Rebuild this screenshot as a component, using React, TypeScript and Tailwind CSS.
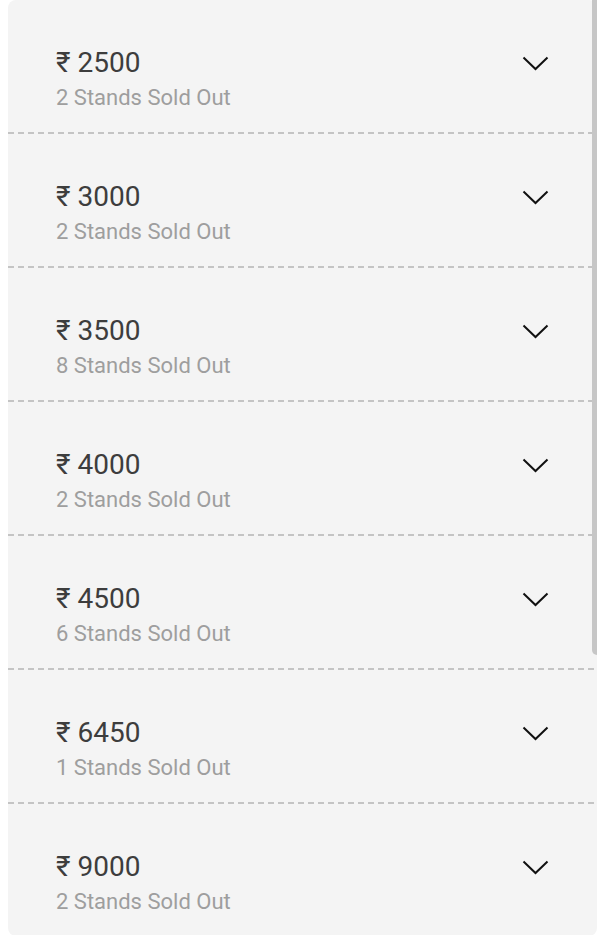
const tiers = [
  { price: 2500, sold: 2 },
  { price: 3000, sold: 2 },
  { price: 3500, sold: 8 },
  { price: 4000, sold: 2 },
  { price: 4500, sold: 6 },
  { price: 6450, sold: 1 },
  { price: 9000, sold: 2 },
];

function Chevron() {
  return (
    <svg width="27" height="15" viewBox="0 0 27 15" fill="none" className="shrink-0">
      <path d="M1.5 1.5 L13.5 13 L25.5 1.5" stroke="#111" strokeWidth="2" />
    </svg>
  );
}

export default function App() {
  return (
    <div className="relative min-h-[935px] bg-white pl-2 font-['Roboto',sans-serif]">
      <div className="rounded-lg bg-[#f4f4f4]">
        {tiers.map((t, i) => (
          <div key={t.price}>
            <div className="flex items-start pl-12 pr-[48px] pt-[45px] pb-[19px]">
              <div className="flex-1">
                <p className="text-[28px] leading-[36px] text-[#3d3d3d]">₹ {t.price}</p>
                <p className="mt-[2px] text-[22px] leading-[30px] text-[#9e9e9e]">
                  {t.sold} Stands Sold Out
                </p>
              </div>
              <div className="flex h-[36px] items-center pt-[1px]">
                <Chevron />
              </div>
            </div>
            {i < tiers.length - 1 && (
              <div className="h-[2px] bg-[repeating-linear-gradient(90deg,#c4c4c4_0_6px,transparent_6px_10px)]" />
            )}
          </div>
        ))}
      </div>
      <div className="absolute right-0 top-0 h-[655px] w-[5px] rounded-bl-md bg-[#c6c6c6]" />
    </div>
  );
}
